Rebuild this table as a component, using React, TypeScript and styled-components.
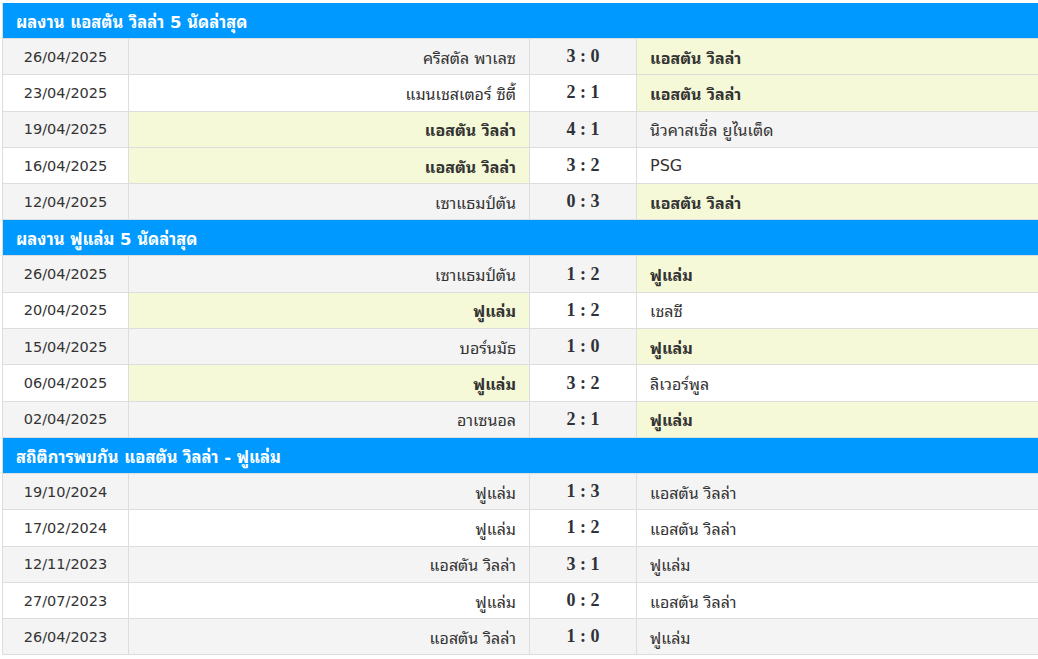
import { createGlobalStyle } from "styled-components";
import styled from "styled-components";

const GlobalStyle = createGlobalStyle`
  body {
    margin: 0;
    background: #fff;
    font-family: Tahoma, "DejaVu Sans", "Noto Sans Thai Looped", "Loma", "Waree",
      "Garuda", "Umpush", "Noto Sans Thai", "Noto Sans", sans-serif;
    color: #333;
  }
`;

type Match = {
  date: string;
  home: string;
  score: string;
  away: string;
  win?: "home" | "away";
};

type Section = {
  title: string;
  matches: Match[];
};

const VILLA = "แอสตัน วิลล่า";
const FULHAM = "ฟูแล่ม";

const sections: Section[] = [
  {
    title: "ผลงาน แอสตัน วิลล่า 5 นัดล่าสุด",
    matches: [
      { date: "26/04/2025", home: "คริสตัล พาเลซ", score: "3 : 0", away: VILLA, win: "away" },
      { date: "23/04/2025", home: "แมนเชสเตอร์ ซิตี้", score: "2 : 1", away: VILLA, win: "away" },
      { date: "19/04/2025", home: VILLA, score: "4 : 1", away: "นิวคาสเซิ่ล ยูไนเต็ด", win: "home" },
      { date: "16/04/2025", home: VILLA, score: "3 : 2", away: "PSG", win: "home" },
      { date: "12/04/2025", home: "เซาแธมป์ตัน", score: "0 : 3", away: VILLA, win: "away" },
    ],
  },
  {
    title: "ผลงาน ฟูแล่ม 5 นัดล่าสุด",
    matches: [
      { date: "26/04/2025", home: "เซาแธมป์ตัน", score: "1 : 2", away: FULHAM, win: "away" },
      { date: "20/04/2025", home: FULHAM, score: "1 : 2", away: "เชลซี", win: "home" },
      { date: "15/04/2025", home: "บอร์นมัธ", score: "1 : 0", away: FULHAM, win: "away" },
      { date: "06/04/2025", home: FULHAM, score: "3 : 2", away: "ลิเวอร์พูล", win: "home" },
      { date: "02/04/2025", home: "อาเซนอล", score: "2 : 1", away: FULHAM, win: "away" },
    ],
  },
  {
    title: "สถิติการพบกัน แอสตัน วิลล่า - ฟูแล่ม",
    matches: [
      { date: "19/10/2024", home: FULHAM, score: "1 : 3", away: VILLA },
      { date: "17/02/2024", home: FULHAM, score: "1 : 2", away: VILLA },
      { date: "12/11/2023", home: VILLA, score: "3 : 1", away: FULHAM },
      { date: "27/07/2023", home: FULHAM, score: "0 : 2", away: VILLA },
      { date: "26/04/2023", home: VILLA, score: "1 : 0", away: FULHAM },
    ],
  },
];

const Page = styled.div`
  padding: 3px 1px 0 2px;
`;

const Table = styled.div`
  width: 1035px;
  border-left: 1px solid #ddd;
  border-right: 1px solid #ddd;
`;

const Header = styled.div`
  height: 35px;
  background: #0099ff;
  color: #fff;
  font-weight: bold;
  font-size: 16.5px;
  display: flex;
  align-items: center;
  padding-left: 13px;
  border-bottom: 1px solid #ddd;
`;

const Row = styled.div<{ $alt: boolean }>`
  display: grid;
  grid-template-columns: 126px 401px 107px 1fr;
  height: 36.3px;
  box-sizing: border-box;
  border-bottom: 1px solid #ddd;
  background: ${(p) => (p.$alt ? "#f4f4f4" : "#fff")};
  font-size: 16px;
`;

const Cell = styled.div<{ $align: "left" | "right" | "center"; $win?: boolean }>`
  display: flex;
  align-items: center;
  justify-content: ${(p) =>
    p.$align === "left" ? "flex-start" : p.$align === "right" ? "flex-end" : "center"};
  padding: 0 13px;
  border-right: 1px solid #ddd;
  white-space: nowrap;
  font-weight: ${(p) => (p.$win ? "bold" : "normal")};
  background: ${(p) => (p.$win ? "#f5f9d7" : "transparent")};
  &:last-child {
    border-right: none;
  }
`;

const DateCell = styled(Cell)`
  font-size: 14.5px;
`;

const Score = styled(Cell)`
  font-family: "Liberation Serif", "DejaVu Serif", serif;
  font-size: 18px;
  font-weight: bold;
  color: #2f3238;
`;

export default function App() {
  let idx = 0;
  return (
    <Page>
      <GlobalStyle />
      <Table>
        {sections.map((s) => {
          idx = 0;
          return (
            <div key={s.title}>
              <Header>{s.title}</Header>
              {s.matches.map((m) => {
                const alt = idx++ % 2 === 0;
                return (
                  <Row key={m.date + m.home} $alt={alt}>
                    <DateCell $align="center">{m.date}</DateCell>
                    <Cell $align="right" $win={m.win === "home"}>
                      {m.home}
                    </Cell>
                    <Score $align="center">{m.score}</Score>
                    <Cell $align="left" $win={m.win === "away"}>
                      {m.away}
                    </Cell>
                  </Row>
                );
              })}
            </div>
          );
        })}
      </Table>
    </Page>
  );
}
